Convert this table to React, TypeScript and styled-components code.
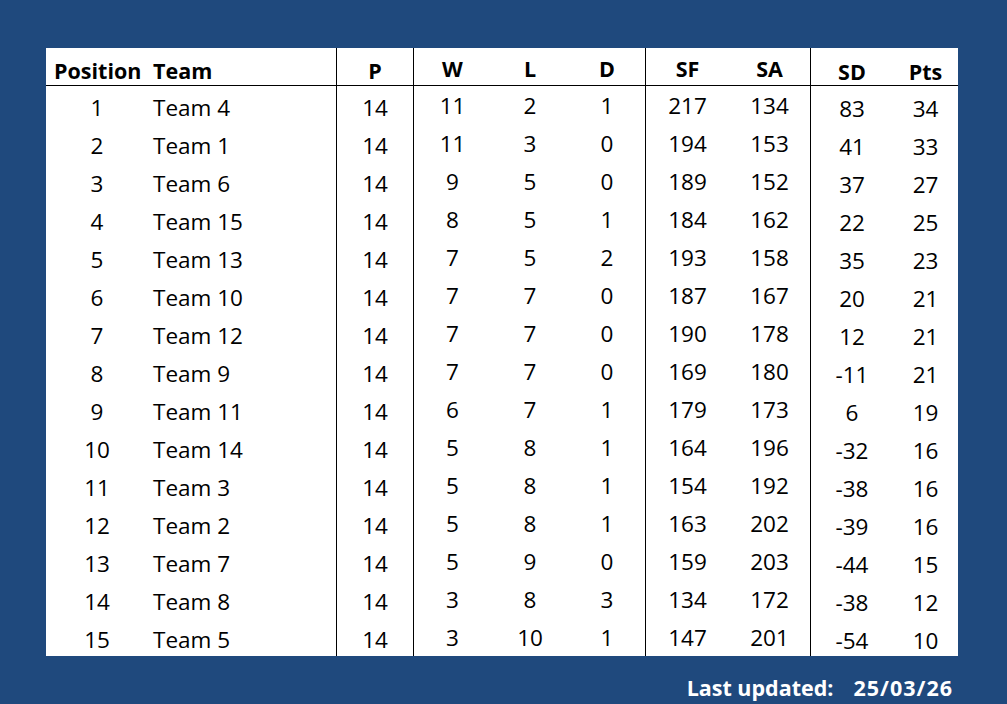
import React from 'react';
import styled, {createGlobalStyle} from "styled-components";

type Col = {
  key: string,
  label: string,
  width: number,
  align: 'left' | 'center',
  shift: number,
  divider?: boolean,
  pad?: number,
};

// widths add up to 912 (white area 46 -> 958)
const columns: Col[] = [
  {key: 'pos', label: 'Position', width: 102, align: 'center', shift: 3},
  {key: 'team', label: 'Team', width: 189, align: 'left', shift: 3, divider: true, pad: 5},
  {key: 'p', label: 'P', width: 77, align: 'center', shift: 3, divider: true},
  {key: 'w', label: 'W', width: 77, align: 'center', shift: 1},
  {key: 'l', label: 'L', width: 78, align: 'center', shift: 1},
  {key: 'd', label: 'D', width: 77, align: 'center', shift: 1, divider: true},
  {key: 'sf', label: 'SF', width: 83, align: 'center', shift: 1},
  {key: 'sa', label: 'SA', width: 82, align: 'center', shift: 1, divider: true},
  {key: 'sd', label: 'SD', width: 82, align: 'center', shift: 4},
  {key: 'pts', label: 'Pts', width: 65, align: 'center', shift: 4},
];

const rows: (string | number)[][] = [
  [1, 'Team 4', 14, 11, 2, 1, 217, 134, 83, 34],
  [2, 'Team 1', 14, 11, 3, 0, 194, 153, 41, 33],
  [3, 'Team 6', 14, 9, 5, 0, 189, 152, 37, 27],
  [4, 'Team 15', 14, 8, 5, 1, 184, 162, 22, 25],
  [5, 'Team 13', 14, 7, 5, 2, 193, 158, 35, 23],
  [6, 'Team 10', 14, 7, 7, 0, 187, 167, 20, 21],
  [7, 'Team 12', 14, 7, 7, 0, 190, 178, 12, 21],
  [8, 'Team 9', 14, 7, 7, 0, 169, 180, -11, 21],
  [9, 'Team 11', 14, 6, 7, 1, 179, 173, 6, 19],
  [10, 'Team 14', 14, 5, 8, 1, 164, 196, -32, 16],
  [11, 'Team 3', 14, 5, 8, 1, 154, 192, -38, 16],
  [12, 'Team 2', 14, 5, 8, 1, 163, 202, -39, 16],
  [13, 'Team 7', 14, 5, 9, 0, 159, 203, -44, 15],
  [14, 'Team 8', 14, 3, 8, 3, 134, 172, -38, 12],
  [15, 'Team 5', 14, 3, 10, 1, 147, 201, -54, 10],
];

const template = columns.map(c => `${c.width}px`).join(' ');

const App: React.FC = () => {
  return (
    <>
      <GlobalStyle/>
      <Page>
        <Sheet>
          <HeaderRow cols={template}>
            {columns.map(c =>
              <HeaderCell
                key={c.key}
                align={c.key === 'pos' ? 'left' : c.align}
                shift={c.shift + 1.5}
                divider={c.divider}
                pad={c.key === 'pos' ? 8 : c.pad}
              >
                {c.label}
              </HeaderCell>
            )}
          </HeaderRow>
          {rows.map(r =>
            <Row cols={template} key={String(r[0])}>
              {columns.map((c, i) =>
                <Cell key={c.key} align={c.align} shift={c.shift} divider={c.divider} pad={c.pad}>
                  {r[i]}
                </Cell>
              )}
            </Row>
          )}
        </Sheet>
        <Footer>
          <span>Last updated:</span>
          <FooterDate>25/03/26</FooterDate>
        </Footer>
      </Page>
    </>
  );
};

const GlobalStyle = createGlobalStyle`
  html, body {
    margin: 0;
    padding: 0;
    background: #1f497d;
  }
  body {
    font-family: "Open Sans", "Noto Sans", sans-serif;
  }
`;

const Page = styled.div`
  width: 1007px;
  height: 704px;
  background-color: #1f497d;
  padding: 48px 0 0 46px;
  box-sizing: border-box;
  overflow: hidden;
`;

const Sheet = styled.div`
  width: 912px;
  background-color: #ffffff;
  color: #000000;
`;

const Row = styled.div<{ cols: string }>`
  display: grid;
  grid-template-columns: ${props => props.cols};
  height: 38px;
`;

const HeaderRow = styled(Row)`
  height: 37px;
  border-bottom: 1px solid #000000;
`;

const Cell = styled.div<{ align: string, shift: number, divider?: boolean, pad?: number }>`
  box-sizing: border-box;
  height: 100%;
  display: flex;
  align-items: center;
  justify-content: ${props => props.align === 'left' ? 'flex-start' : 'center'};
  padding-top: ${props => props.shift * 2}px;
  padding-left: ${props => props.pad || 0}px;
  border-right: ${props => props.divider ? '1px solid #000000' : 'none'};
  font-size: 22.5px;
  line-height: 1;
  white-space: nowrap;
`;

const HeaderCell = styled(Cell)`
  font-weight: 700;
  font-size: 21.5px;
`;

const Footer = styled.div`
  width: 907px;
  display: flex;
  justify-content: flex-end;
  gap: 20px;
  padding-top: 21px;
  color: #ffffff;
  font-weight: 700;
  font-size: 21.5px;
  line-height: 1;
`;

const FooterDate = styled.span`
  letter-spacing: 1px;
`;

export default App;
